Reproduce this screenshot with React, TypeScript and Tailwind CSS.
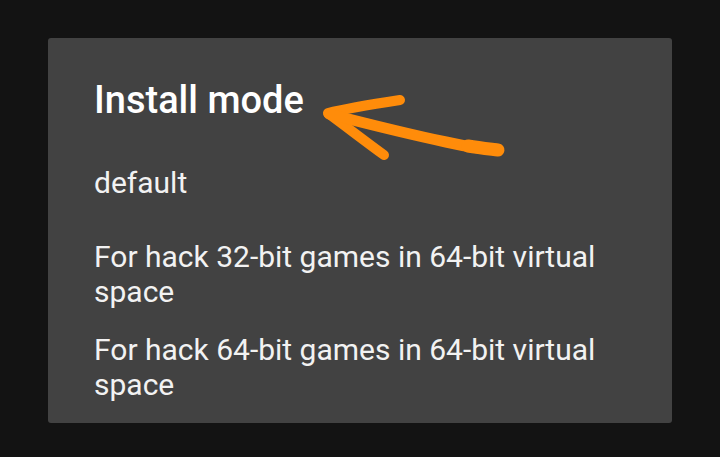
import React from 'react'

const options = [
  'default',
  'For hack 32-bit games in 64-bit virtual space',
  'For hack 64-bit games in 64-bit virtual space'
]

function Arrow() {
  return (
    <svg
      className="absolute inset-0 pointer-events-none"
      width="624"
      height="385"
      viewBox="0 0 624 385"
      fill="none"
    >
      <g stroke="#ff8c0a" strokeLinecap="round" strokeLinejoin="round">
        <path d="M352 62 C 326 66 300 70 280 75" strokeWidth="10" />
        <path d="M281 76 C 300 90 318 104 336 117" strokeWidth="10" />
        <path d="M281 76 C 320 86 360 96 398 104 C 420 109 435 111 448 111" strokeWidth="11" />
        <path d="M420 108 C 432 110 442 111 450 112" strokeWidth="13" />
      </g>
    </svg>
  )
}

export default function App() {
  return (
    <div
      className="w-[720px] h-[457px] bg-[#131313] pt-[38px] px-[48px]"
      style={{ fontFamily: 'Roboto, "Noto Sans", sans-serif' }}
    >
      <div className="relative w-[624px] h-[385px] bg-[#424242] rounded-[3px] pt-[40px] pl-[46px] pr-[46px]">
        <h2 className="text-[38px] leading-[44px] font-medium text-white">Install mode</h2>
        <div className="mt-[43px] text-[30px] leading-[35px] text-[#f2f2f2]">{options[0]}</div>
        <div className="mt-[39px] text-[30px] leading-[35px] text-[#f2f2f2]">{options[1]}</div>
        <div className="mt-[23px] text-[30px] leading-[35px] text-[#f2f2f2]">{options[2]}</div>
        <Arrow />
      </div>
    </div>
  )
}
